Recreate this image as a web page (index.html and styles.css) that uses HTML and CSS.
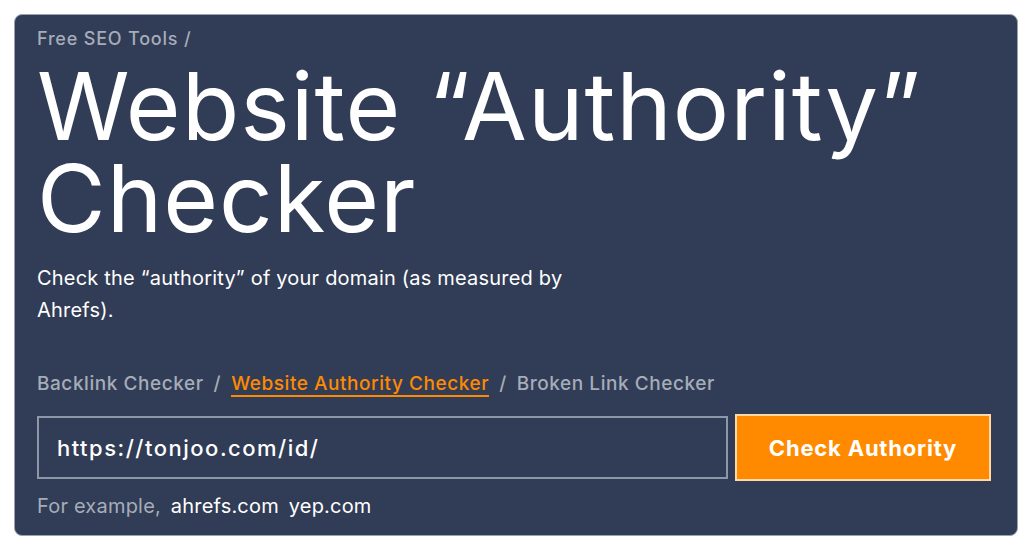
FILE: index.html
```html
<!DOCTYPE html>
<html lang="en">
<head>
    <meta charset="UTF-8">
    <meta name="viewport" content="width=device-width, initial-scale=1.0">
    <title>Website Authority Checker</title>
    <link rel="stylesheet" href="styles.css">
</head>
<body>
    <div class="tool-card">
        <div class="breadcrumb">Free SEO Tools /</div>

        <h1 class="tool-title">Website “Authority” Checker</h1>

        <p class="tool-desc">Check the “authority” of your domain (as measured by Ahrefs).</p>

        <!-- Tool switcher -->
        <div class="tool-nav">
            <a href="#">Backlink Checker</a>
            <span class="sep">/</span>
            <a href="#" class="active">Website Authority Checker</a>
            <span class="sep">/</span>
            <a href="#">Broken Link Checker</a>
        </div>

        <form class="check-form">
            <input class="domain-input" type="text" value="https://tonjoo.com/id/">
            <button class="check-button" type="button">Check Authority</button>
        </form>

        <div class="examples">
            For example, <a href="#">ahrefs.com</a> <a href="#">yep.com</a>
        </div>
    </div>
</body>
</html>
```

FILE: styles.css
```css
/* General page styles */
body {
    margin: 0;
    padding: 14px;
    background-color: #fff;
    font-family: Inter, "Noto Sans", sans-serif;
}

/* Card */
.tool-card {
    width: 1004px;
    height: 522px;
    box-sizing: border-box;
    padding: 13px 22px 0;
    background-color: #313c56;
    border: 1px solid #9aa3ae;
    border-radius: 8px;
    color: #fff;
}

.breadcrumb {
    font-size: 18px;
    font-weight: 500;
    color: #a6adb9;
    line-height: 22px;
    letter-spacing: 0.8px;
}

.tool-title {
    margin: 10px 0 0;
    font-size: 94px;
    font-weight: 400;
    line-height: 92px;
    letter-spacing: 1px;
}

.tool-desc {
    width: 560px;
    margin: 18px 0 0;
    font-size: 20px;
    line-height: 32px;
    letter-spacing: 0.2px;
}

/* Tool switcher */
.tool-nav {
    display: flex;
    gap: 10px;
    margin-top: 47px;
    font-size: 19px;
    font-weight: 500;
    line-height: 22px;
    letter-spacing: 0.55px;
}

.tool-nav a {
    color: #a6adb9;
    text-decoration: none;
}

.tool-nav a.active {
    color: #ff8a00;
    border-bottom: 2px solid #ff8a00;
}

.tool-nav .sep {
    color: #a6adb9;
}

/* Form */
.check-form {
    display: flex;
    align-items: center;
    gap: 7px;
    margin-top: 17px;
}

.domain-input {
    width: 691px;
    height: 63px;
    box-sizing: border-box;
    padding: 0 18px;
    background: transparent;
    border: 2px solid #8c97a8;
    color: #fff;
    font-family: inherit;
    font-size: 22px;
    font-weight: 500;
    letter-spacing: 1.5px;
    outline: none;
}

.check-button {
    width: 256px;
    height: 67px;
    background-color: #ff8a00;
    border: 2px solid #ffd9a8;
    color: #fff;
    font-family: inherit;
    font-size: 22px;
    font-weight: 700;
    letter-spacing: 0.8px;
    cursor: pointer;
}

.examples {
    margin-top: 13px;
    font-size: 20px;
    color: #a6adb9;
    letter-spacing: 0.2px;
}

.examples a {
    color: #fff;
    text-decoration: none;
    margin-left: 4px;
}
```
